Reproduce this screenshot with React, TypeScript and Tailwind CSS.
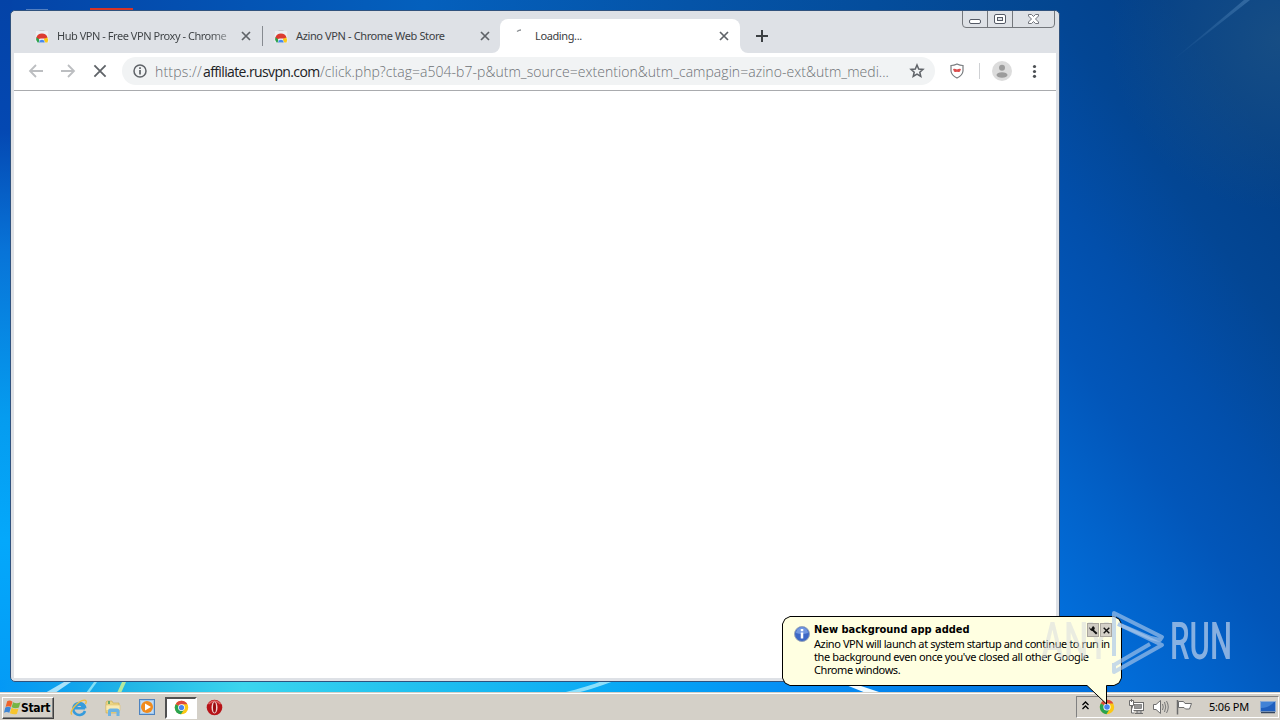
import React from 'react';

const tabFont = "font-['Noto_Sans','Open_Sans',sans-serif]";

const Desktop = () => (
    <svg className="absolute inset-0" width="1280" height="720" viewBox="0 0 1280 720">
        <defs>
            <linearGradient id="left" x1="0" y1="0" x2="0" y2="1">
                <stop offset="0" stopColor="#0443a7" />
                <stop offset="0.18" stopColor="#0448b2" />
                <stop offset="0.35" stopColor="#0874d8" />
                <stop offset="0.58" stopColor="#059cef" />
                <stop offset="0.75" stopColor="#04a8fb" />
                <stop offset="1" stopColor="#0499f5" />
            </linearGradient>
            <linearGradient id="top" x1="0" y1="0" x2="1" y2="0">
                <stop offset="0" stopColor="#0443a7" />
                <stop offset="0.4" stopColor="#0460bd" />
                <stop offset="0.65" stopColor="#0554a8" />
                <stop offset="1" stopColor="#034690" />
            </linearGradient>
            <linearGradient id="right" gradientUnits="userSpaceOnUse" x1="1270" y1="140" x2="897" y2="411">
                <stop offset="0" stopColor="#034088" />
                <stop offset="0.22" stopColor="#034694" />
                <stop offset="0.44" stopColor="#024fab" />
                <stop offset="0.62" stopColor="#0256b9" />
                <stop offset="0.8" stopColor="#0263cb" />
                <stop offset="1" stopColor="#0270dd" />
            </linearGradient>
            <radialGradient id="haze" gradientUnits="userSpaceOnUse" cx="1280" cy="40" r="170">
                <stop offset="0" stopColor="#2a5a80" stopOpacity="0.5" />
                <stop offset="1" stopColor="#2a5a80" stopOpacity="0" />
            </radialGradient>
            <linearGradient id="ray" gradientUnits="userSpaceOnUse" x1="1170" y1="60" x2="1250" y2="0">
                <stop offset="0" stopColor="#4d83b8" stopOpacity="0" />
                <stop offset="1" stopColor="#4d83b8" stopOpacity="0.55" />
            </linearGradient>
            <linearGradient id="bottom" gradientUnits="userSpaceOnUse" x1="0" y1="0" x2="1280" y2="0">
                <stop offset="0" stopColor="#0498f5" />
                <stop offset="0.05" stopColor="#0fa2ee" />
                <stop offset="0.1" stopColor="#22b5e6" />
                <stop offset="0.19" stopColor="#3bd5ee" />
                <stop offset="0.32" stopColor="#22c1ef" />
                <stop offset="0.5" stopColor="#06a6f5" />
                <stop offset="0.62" stopColor="#058ef5" />
                <stop offset="0.85" stopColor="#0270dd" />
                <stop offset="1" stopColor="#0252b2" />
            </linearGradient>
        </defs>
        <rect width="1280" height="720" fill="url(#right)" />
        <rect width="1060" height="12" fill="url(#top)" />
        <rect width="12" height="720" fill="url(#left)" />
        <rect x="1060" width="220" height="300" fill="url(#haze)" />
        <path d="M1168 64 L1244 0 L1250 0 Z" fill="url(#ray)" />
        <rect y="680" width="1100" height="14" fill="url(#bottom)" />
        <path d="M45 693 L64 682 L71 682 L55 693 Z" fill="#c4edfb" opacity="0.85" />
        <path d="M86 693 L94 682 L97 682 L89 693 Z" fill="#86dff5" />
        <path d="M117 693 L122 682 L126 682 L121 693 Z" fill="#b6ea9e" />
        <path d="M562 693 Q590 686 602 681 L614 681 Q590 690 576 693 Z" fill="#aeecfd" opacity="0.8" />
        <path d="M846 685 L858 685 L882 693 L866 693 Z" fill="#effaff" />
        <path d="M26 9.500 h22" stroke="#8ba6d2" strokeOpacity="0.6" />
        <path d="M90 9.500 h43" stroke="#d63427" strokeWidth="3" />
    </svg>
);

const StoreIcon = () => (
    <svg className="shrink-0" width="14" height="16" viewBox="0 0 14 16">
        <path d="M4.500 2.500 h5" fill="none" stroke="#c9cbce" />
        <path d="M1 3 h12 l.7 11.500 H.3 Z" fill="#eceef1" />
        <path d="M1.600 12 A5.600 5.600 0 0 1 12 8.800 L7 9.500 Z" fill="#dc3b30" />
        <path d="M1.400 8.900 A5.800 5.800 0 0 0 2.600 14.500 H5 L3.800 11 Z" fill="#2ca24c" />
        <path d="M12.200 9 A6 6 0 0 1 12.500 14.500 H8 L9.800 9.600 Z" fill="#fbc816" />
        <path d="M1.400 9.500 A5.800 5.800 0 0 1 12.500 9.500 L9.500 10.500 L4 10.500 Z" fill="#dc3b30" />
        <path d="M3.600 14.500 A3.400 3.400 0 0 1 10.300 14.500 Z" fill="#fff" />
        <path d="M4.200 14.500 A2.600 2.600 0 0 1 9.700 14.500 Z" fill="#4688ee" />
    </svg>
);

const Cross = ({ size, color = '#5f6368', width = 1.7 }: { size: number; color?: string; width?: number }) => (
    <svg className="shrink-0" width={size} height={size} viewBox="0 0 10 10">
        <path d="M1 1 L9 9 M9 1 L1 9" stroke={color} strokeWidth={width} fill="none" />
    </svg>
);

const ChromeIcon = ({ size }: { size: number }) => (
    <svg className="shrink-0" width={size} height={size} viewBox="0 0 16 16">
        <circle cx="8" cy="8" r="7.200" fill="#fbc814" />
        <path d="M8 8 L1.800 4.400 A7.200 7.200 0 0 1 14.300 4.600 L8 4.600 Z" fill="#dd4a3c" />
        <path d="M8 8 L1.800 4.400 A7.200 7.200 0 0 0 7.400 15.200 L10.900 9.800 Z" fill="#2aa350" />
        <circle cx="8" cy="8" r="3.600" fill="#fff" />
        <circle cx="8" cy="8" r="2.800" fill="#4a85ec" />
    </svg>
);

const TabStrip = () => (
    <div className={`flex h-[42px] items-end bg-[#dee1e6] text-[11px] tracking-[-0.38px] text-[#3c4043] ${tabFont}`}>
        <div className="flex h-[34px] w-[248px] items-center pl-[21px]">
            <StoreIcon />
            <span className="ml-2 w-[175px] whitespace-nowrap bg-linear-to-r from-[#3c4043] from-88% to-[#b9bdc2] bg-clip-text tracking-[-0.46px] text-transparent">
                Hub VPN - Free VPN Proxy - Chrome
            </span>
            <span className="ml-[9px]"><Cross size={10} /></span>
        </div>
        <div className="mb-[7px] h-5 w-px bg-[#868a90]" />
        <div className="flex h-[34px] w-[237px] items-center pl-[11px]">
            <StoreIcon />
            <span className="ml-2 w-[184px] whitespace-nowrap">Azino VPN - Chrome Web Store</span>
            <Cross size={10} />
        </div>
        <div className="relative flex h-[34px] w-[240px] items-center rounded-t-lg bg-white pl-4">
            <svg className="absolute -left-2 bottom-0" width="8" height="8"><path d="M8 0 V8 H0 A8 8 0 0 0 8 0" fill="#fff" /></svg>
            <svg className="absolute -right-2 bottom-0" width="8" height="8"><path d="M0 0 V8 H8 A8 8 0 0 1 0 0" fill="#fff" /></svg>
            <svg width="16" height="16"><path d="M1 3.500 Q3 2 5 2" fill="none" stroke="#8b8f93" strokeWidth="1.300" /></svg>
            <span className="ml-[3px] w-[184px]">Loading...</span>
            <Cross size={10} />
        </div>
        <svg className="mb-[11px] ml-4" width="12" height="12" viewBox="0 0 12 12">
            <path d="M6 0 V12 M0 6 H12" stroke="#3c4043" strokeWidth="2" />
        </svg>
    </div>
);

const WindowButtons = () => (
    <svg className="absolute right-[3px] top-0" width="94" height="18" viewBox="0 0 94 18">
        <path d="M.5 0 V13 Q.5 16.500 4 16.500 H89 Q92.500 16.500 92.500 13 V0 M25.500 0 V16 M50.500 0 V16" fill="#dee1e6" stroke="#74777c" />
        <rect x="7.500" y="8.500" width="11" height="4" rx="1.500" fill="#fff" stroke="#555a66" />
        <rect x="32.500" y="3.500" width="11" height="9" rx="1.500" fill="#fff" stroke="#555a66" />
        <rect x="35.500" y="6.500" width="5" height="3" fill="#dee1e6" stroke="#555a66" />
        <path d="M66.500 3.500 h3 l2 2 2-2 h3 v1.500 l-3 3 3 3 v1.500 h-3 l-2-2 -2 2 h-3 v-1.500 l3-3 -3-3 Z" fill="#fff" stroke="#62656e" strokeWidth=".9" />
    </svg>
);

const Toolbar = () => (
    <div className="flex h-[38px] items-center border-b border-[#a9abae] bg-white pb-px">
        <svg className="ml-[14px]" width="16" height="14" viewBox="0 0 16 14">
            <path d="M15 7 H2 M8 1 L2 7 L8 13" stroke="#bcbec1" strokeWidth="1.800" fill="none" />
        </svg>
        <svg className="ml-4" width="16" height="14" viewBox="0 0 16 14">
            <path d="M1 7 H14 M8 1 L14 7 L8 13" stroke="#bcbec1" strokeWidth="1.800" fill="none" />
        </svg>
        <span className="ml-[17px]"><Cross size={14} width={1.3} /></span>
        <div className="ml-[15px] flex h-7 w-[813px] items-center rounded-full bg-[#f1f3f4] pl-[11px]">
            <svg width="14" height="14" viewBox="0 0 14 14">
                <circle cx="7" cy="7" r="6" fill="none" stroke="#5f6368" strokeWidth="1.500" />
                <path d="M7 6 V10.500 M7 3.300 V5" stroke="#5f6368" strokeWidth="1.700" />
            </svg>
            <div className="ml-2 flex w-[737px] whitespace-nowrap font-['Open_Sans','Noto_Sans',sans-serif] text-[14px] font-light text-[#6d7175]">
                <span className="w-12 tracking-[0.2px]">https://</span>
                <span className="w-[117px] font-normal tracking-[-0.62px] text-[#202124]">affiliate.rusvpn.com</span>
                <span className="tracking-[0.040px]">/click.php?ctag=a504-b7-p&amp;utm_source=extention&amp;utm_campagin=azino-ext&amp;utm_medi...</span>
            </div>
            <svg className="ml-[17px]" width="16" height="16" viewBox="0 0 16 16">
                <path d="M8 2 L9.700 6 L14 6.400 L10.800 9.200 L11.800 13.500 L8 11.200 L4.200 13.500 L5.200 9.200 L2 6.400 L6.300 6 Z" fill="none" stroke="#5f6368" strokeWidth="1.500" />
            </svg>
        </div>
        <svg className="ml-[15px]" width="14" height="16" viewBox="0 0 14 16">
            <path d="M7 1 Q10 2.500 13 2.500 V8 Q12.500 12.500 7 15 Q1.500 12.500 1 8 V2.500 Q4 2.500 7 1 Z" fill="#fff" stroke="#777b7e" strokeWidth="1.200" />
            <path d="M3 6 Q5 5.500 7 6.500 Q9 5.500 11 6 L10 8.500 Q8 9.500 7 8.500 Q6 9.500 4 8.500 Z" fill="#db4f4f" />
        </svg>
        <div className="ml-[15px] h-4 w-px bg-[#cfd1d4]" />
        <svg className="ml-3" width="20" height="20" viewBox="0 0 20 20">
            <circle cx="10" cy="10" r="10" fill="#dcdcdc" />
            <circle cx="10" cy="6.700" r="3" fill="#9c9c9c" />
            <ellipse cx="10" cy="14" rx="5.500" ry="2.800" fill="#9c9c9c" />
        </svg>
        <svg className="ml-5" width="5" height="14" viewBox="0 0 5 14" fill="#4c5054">
            <circle cx="2.500" cy="2.500" r="1.600" />
            <circle cx="2.500" cy="7.500" r="1.600" />
            <circle cx="2.500" cy="12.300" r="1.600" />
        </svg>
    </div>
);

const BrowserWindow = () => (
    <div className="absolute left-[10px] top-[10px] flex h-[672px] w-[1050px] flex-col rounded-[5px] border border-[#30527e] bg-[#dee1e6] px-[3px] pb-[3px]">
        <TabStrip />
        <WindowButtons />
        <Toolbar />
        <div className="flex-1 bg-white" />
    </div>
);

const Taskbar = () => (
    <div className="absolute inset-x-0 bottom-0 flex h-7 items-center border-t border-[#d4d0c8] bg-[#d4d0c8] shadow-[inset_0_1px_0_#fff]">
        <div className="ml-[2px] mt-[2px] flex h-[22px] w-[52px] items-center border border-b-[#404040] border-l-white border-r-[#404040] border-t-white pl-px shadow-[inset_-1px_-1px_0_#808080]">
            <svg className="shrink-0" width="17" height="17" viewBox="0 0 16 16">
                <path d="M3 2 Q5.500 .5 8 2.500 L6.600 7.500 Q4 6 1.500 7.500 Z" fill="#ef632a" />
                <path d="M8.500 3 Q12 5 15.500 3 L14 8 Q11 9.500 7.200 7.800 Z" fill="#75b544" />
                <path d="M1.200 8 Q4 6.500 6.500 8 L5 13 Q2.500 11.500 0 13 Z" fill="#3e86d5" />
                <path d="M7.100 8.300 Q10.500 10.300 13.600 9 L12.200 13.800 Q9.500 15 5.600 13.300 Z" fill="#f7c52e" />
            </svg>
            <span className="font-['DejaVu_Sans_Condensed','DejaVu_Sans',sans-serif] text-[12px] font-bold tracking-[-0.35px] text-black">Start</span>
        </div>
        <svg className="ml-4 mt-[2px]" width="18" height="18" viewBox="0 0 18 18">
            <path d="M15 9.300 H5.500 Q6 5.500 9.300 5.500 Q12.500 5.500 12.700 8.500 M15 12 A6 6 0 1 1 15.300 9.300" fill="none" stroke="#369bdc" strokeWidth="2.500" />
            <path d="M2 15.500 Q-.5 14 4 8 Q11 0 15.500 1.300 Q17 2.500 15.500 5" fill="none" stroke="#f0bd3d" strokeWidth="1.300" />
        </svg>
        <svg className="ml-4 mt-[2px]" width="18" height="18" viewBox="0 0 18 18">
            <path d="M2 14 V3 L3 2 h5 l1 2 h6 v10 Z" fill="#ecd584" stroke="#c9a94e" strokeWidth=".6" />
            <path d="M4 2 h2 v3 H4 Z" fill="#68a86b" />
            <path d="M2 6 h14 v5.500 H2 Z" fill="#f9eab1" stroke="#dfc56e" strokeWidth=".6" />
            <path d="M4 17 V12 Q4 9.500 6 9.500 h7 Q15.500 9.500 15.500 12 v5 h-3 v-4 h-5.500 v4 Z" fill="#6db4e4" />
        </svg>
        <svg className="ml-[17px] mt-[2px]" width="17" height="17" viewBox="0 0 17 17">
            <rect x=".5" y=".5" width="15" height="15" fill="#9fc8ee" stroke="#4d83bf" />
            <rect x="2" y="2" width="12" height="12" fill="#c3dcf3" />
            <circle cx="8" cy="8" r="6" fill="#f08b1d" />
            <path d="M6 4.500 L12 8 L6 11.500 Z" fill="#fff" />
        </svg>
        <div className="ml-[9px] mt-[2px] flex h-[22px] w-8 items-center justify-center border-2 border-b-white border-l-[#505050] border-r-white border-t-[#505050] bg-white">
            <ChromeIcon size={15} />
        </div>
        <svg className="ml-[9px] mt-[2px]" width="17" height="17" viewBox="0 0 17 17">
            <circle cx="8.500" cy="8.500" r="7.800" fill="#b71318" />
            <path d="M2.500 5 Q8.500 -1 14.500 5" stroke="#df6262" strokeWidth="1.500" fill="none" />
            <ellipse cx="8.500" cy="8.500" rx="3" ry="6" fill="#f0d2d2" />
            <ellipse cx="8.500" cy="8.500" rx="1.500" ry="5.200" fill="#9a0c10" />
        </svg>
        <div className="ml-auto mr-[1px] mt-px flex h-[22px] w-[203px] items-center border border-b-white border-l-[#808080] border-r-white border-t-[#808080]">
            <svg className="mb-1 ml-1" width="9" height="9" viewBox="0 0 9 9">
                <path d="M1.500 4 L4.500 1 L7.500 4 M1.500 8 L4.500 5 L7.500 8" stroke="#000" strokeWidth="1.300" fill="none" />
            </svg>
            <span className="ml-[9px]"><ChromeIcon size={16} /></span>
            <svg className="ml-[13px]" width="17" height="16" viewBox="0 0 17 16">
                <rect x="4.500" y="3.500" width="11" height="8" fill="#fff" stroke="#6d6d6d" />
                <rect x="6.500" y="5.500" width="7" height="4" fill="#969696" stroke="#6d6d6d" strokeWidth=".7" />
                <path d="M7 14.500 H15 M9 12 h4 v2 H9 Z" fill="#fff" stroke="#6d6d6d" />
                <path d="M1.500 1.500 h4 v5 h-4 Z M3.500 6.500 V14 H6.500 M3.500 0 V3" fill="#fff" stroke="#6d6d6d" />
            </svg>
            <svg className="ml-[7px]" width="18" height="16" viewBox="0 0 18 16">
                <path d="M1.500 5.500 H4 L8.500 1.500 V14.500 L4 10.500 H1.500 Z" fill="#fff" stroke="#6d6d6d" />
                <path d="M10.500 5 Q12 8 10.500 11 M12.500 3 Q15 8 12.500 13 M14.500 2 Q18 8 14.500 14" fill="none" stroke="#777" />
            </svg>
            <svg className="ml-[6px]" width="17" height="16" viewBox="0 0 17 16">
                <path d="M2.500 2.500 H7.500 L9 4.500 H15.500 L13.500 10 H9.500 L8 8.500 H2.500 Z" fill="#fff" stroke="#6d6d6d" />
                <path d="M1.500 1 V15.500" stroke="#6d6d6d" strokeWidth="1.500" />
            </svg>
            <span className={`ml-4 whitespace-nowrap text-[11px] tracking-[-0.2px] text-black ${tabFont}`}>5:06 PM</span>
            <svg className="ml-auto mr-[2px]" width="16" height="13" viewBox="0 0 16 13">
                <rect x=".5" y=".5" width="15" height="10" fill="#1f5fbe" stroke="#8cabd4" />
                <path d="M1 1 H14 Q9 7 1 7 Z" fill="#4182d6" />
                <path d="M1 11.500 H15" stroke="#33455f" strokeWidth="1.500" />
            </svg>
        </div>
    </div>
);

const BalloonButtons = () => (
    <div className="absolute left-[1087px] top-[623px] flex gap-px">
        <div className="flex h-[14px] w-3 items-center justify-center border border-[#aaa69e] bg-[#cfcbc3]">
            <svg width="10" height="10" viewBox="0 0 10 10">
                <path d="M1 2 L3 4 L5 1 Q8 3 6 5 L9.500 8 L8 9.500 L4.500 6 Q2 6 1 2 Z" fill="#111" />
            </svg>
        </div>
        <div className="flex h-[14px] w-3 items-center justify-center border border-[#aaa69e] bg-[#d4d0c8]">
            <Cross size={7} color="#111" width={2} />
        </div>
    </div>
);

const Balloon = () => (
    <div className="absolute left-[782px] top-[616px] h-[90px] w-[340px]">
        <svg className="absolute inset-0" width="340" height="90" viewBox="0 0 340 90">
            <path d="M8 .5 H332 L337 3 L339.500 8 V62 L337 67 L332 69.500 H324.500 V88 L305 69.500 H8 L3 67 L.5 62 V8 L3 3 Z" fill="#ffffe1" stroke="#000" />
        </svg>
        <div className="relative flex pl-3 pt-[7px] text-black">
            <svg className="mt-[3px] shrink-0" width="16" height="16" viewBox="0 0 16 16">
                <circle cx="8" cy="8" r="7.500" fill="#3d68c6" stroke="#9aa6b8" />
                <path d="M2 7 A6 6 0 0 1 14 7 Q8 9 2 7" fill="#7297e0" />
                <path d="M8 6.500 V12.500 M8 3 V5.200" stroke="#fff" strokeWidth="2.500" />
            </svg>
            <div className="ml-1 w-[304px] whitespace-nowrap">
                <p className="font-['DejaVu_Sans_Condensed','DejaVu_Sans',sans-serif] text-[11px] font-bold leading-[14px] tracking-[-0.020px]">New background app added</p>
                <p className={`text-[11px] leading-[13px] tracking-[-0.41px] ${tabFont}`}>
                    Azino VPN will launch at system startup and continue to run in<br />
                    <span className="tracking-[-0.37px]">the background even once you've closed all other Google</span><br />
                    Chrome windows.
                </p>
            </div>
        </div>
    </div>
);

const Watermark = () => (
    <svg className="absolute left-[1030px] top-[604px]" width="220" height="76" viewBox="0 0 220 76">
        <g fontFamily="Roboto, sans-serif" fontSize="51" fontWeight="500">
            <text x="11" y="55" textLength="68" lengthAdjust="spacingAndGlyphs" fill="#d6dae0" opacity="0.5">ANY</text>
            <text x="140" y="55" textLength="62" lengthAdjust="spacingAndGlyphs" fill="#b4cbea" opacity="0.75">RUN</text>
        </g>
        <g fill="none" stroke="#a9c6ea" strokeOpacity="0.65" strokeWidth="4" strokeLinejoin="round">
            <path d="M84 52 V9 L132 33 L130 36 L121 34 L88 20" />
            <path d="M84 59 V68 L132 41 L88 20 M84 61 L120 40" />
        </g>
    </svg>
);

const App = () => {
    return (
        <div className="relative h-[720px] w-[1280px] overflow-hidden">
            <Desktop />
            <BrowserWindow />
            <Taskbar />
            <Balloon />
            <Watermark />
            <BalloonButtons />
        </div>
    );
};

export default App;
